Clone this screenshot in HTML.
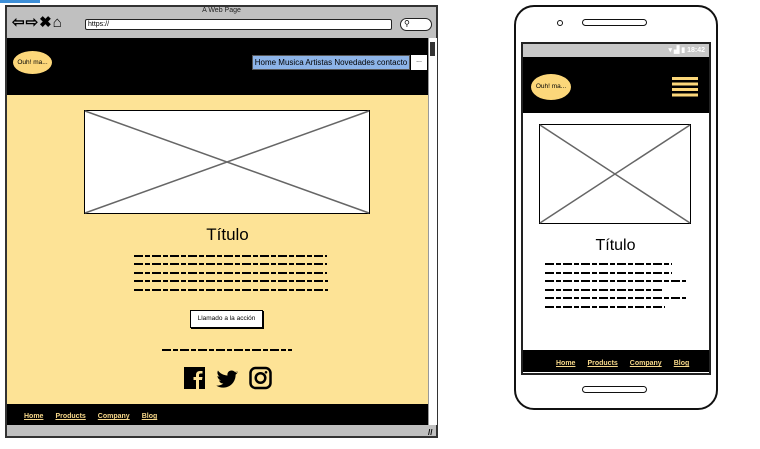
<!DOCTYPE html>
<html><head><meta charset="utf-8"><style>
*{margin:0;padding:0;box-sizing:border-box}
body{width:760px;height:449px;background:#fff;position:relative;overflow:hidden;font-family:"Liberation Sans",sans-serif}
.a{position:absolute}
.sq{position:absolute;height:2px;background:repeating-linear-gradient(90deg,#000 0 9px,transparent 9px 11px,#000 11px 16px,transparent 16px 18px)}
.fl a{color:#f7d88a;text-decoration:underline;font-size:7px;font-weight:bold;margin-right:12px}
</style></head><body>
<div class="a" style="left:0;top:0;width:40px;height:3px;background:#3d8fd8"></div>
<div class="a" style="left:5px;top:5px;width:433px;height:433px;border:2px solid #333;background:#c0c0c0"></div>
<div class="a" style="left:0;top:7px;width:443px;text-align:center;font-size:7px;color:#222">A Web Page</div>
<div class="a" style="left:12px;top:13px;font-size:15px;font-weight:bold;letter-spacing:1px">⇦⇨✖⌂</div>
<div class="a" style="left:85px;top:19px;width:307px;height:11px;border:1.5px solid #222;border-radius:2px;background:#fff;font-size:7px;padding-left:2px;line-height:9px">https://</div>
<div class="a" style="left:400px;top:18px;width:32px;height:13px;border:1.5px solid #222;border-radius:7px;background:#fff;font-size:8px;padding-left:3px;line-height:10px">⚲</div>
<div class="a" style="left:7px;top:38px;width:421px;height:57px;background:#000"></div>
<div class="a" style="left:13px;top:51px;width:39px;height:23px;border-radius:50%;background:#fcd77a;font-size:6.5px;line-height:23px;text-align:center">Ouh! ma...</div>
<div class="a" style="left:252px;top:55px;width:158px;height:15px;background:#8db4e8;border:1px solid #555;font-size:8px;line-height:13px;text-align:center;white-space:nowrap">Home Musica Artistas Novedades contacto</div>
<div class="a" style="left:411px;top:55px;width:16px;height:15px;background:#fff;font-size:7px;text-align:center;line-height:11px">...</div>
<div class="a" style="left:7px;top:95px;width:421px;height:309px;background:#fde396"></div>
<div class="a" style="left:428px;top:38px;width:9px;height:387px;background:#fff;border-left:1px solid #999"></div>
<div class="a" style="left:430px;top:42px;width:5px;height:14px;background:#333"></div>
<svg class="a" style="left:84px;top:110px" width="287" height="105"><rect x="0.5" y="0.5" width="285" height="103" fill="#fff" stroke="#000"/><path d="M1 1L285 103M285 1L1 103" stroke="#666" stroke-width="1.5"/></svg>
<div class="a" style="left:84px;top:225px;width:287px;text-align:center;font-size:17px">Título</div>
<div class="sq" style="left:134px;top:255px;width:193px"></div>
<div class="sq" style="left:134px;top:263px;width:193px"></div>
<div class="sq" style="left:134px;top:272px;width:193px"></div>
<div class="sq" style="left:134px;top:280px;width:194px"></div>
<div class="sq" style="left:134px;top:289px;width:194px"></div>
<div class="a" style="left:190px;top:310px;width:73px;height:18px;background:#fff;border:1.5px solid #000;box-shadow:1px 1px 0 #000;font-size:6.5px;text-align:center;line-height:15px">Llamado a la acción</div>
<div class="sq" style="left:162px;top:349px;width:130px"></div>
<svg class="a" style="left:183px;top:366px" width="90" height="24"><rect x="1" y="1" width="21" height="22" fill="#000"/><path d="M16 23V14h3l.5-3H16V9c0-1 .5-1.5 1.5-1.5H19.5V5H17c-3 0-4 2-4 4v2h-2.5v3H13v9z" fill="#fde396"/><path d="M55 5c-1 .5-2 .8-3 1-1-1-2-1.5-3.5-1.5-2.8 0-4.5 2.4-4 5-4-.2-7.5-2-9.5-5-1.2 2-.5 4.7 1.5 6-.8 0-1.5-.2-2-.6 0 2.3 1.6 4 3.5 4.5-.7.2-1.4.2-2 0 .5 1.8 2.3 3.2 4.3 3.2-2 1.5-4.5 2.2-7 2 2 1.3 4.3 2 6.8 2 8 0 12.7-6.7 12.5-13 1-.6 1.7-1.4 2.3-2.3-.9.4-1.8.6-2.7.7 1-.6 1.6-1.4 1.8-2z" fill="#000"/><rect x="67.5" y="2" width="20" height="20" rx="5" fill="none" stroke="#000" stroke-width="2.5"/><circle cx="77.5" cy="12" r="4.8" fill="none" stroke="#000" stroke-width="2.5"/><circle cx="83" cy="6.3" r="1.3"/></svg>
<div class="a fl" style="left:7px;top:404px;width:421px;height:21px;background:#000;padding:5px 0 0 17px;line-height:10px"><a>Home</a><a>Products</a><a>Company</a><a>Blog</a></div>
<div class="a" style="left:428px;top:428px;font-size:8px;font-weight:bold">//</div>
<div class="a" style="left:514px;top:5px;width:204px;height:405px;border:2.5px solid #111;border-radius:20px;background:#fff"></div>
<div class="a" style="left:557px;top:20px;width:6px;height:6px;border:1.5px solid #111;border-radius:50%"></div>
<div class="a" style="left:582px;top:19px;width:65px;height:7px;border:1.5px solid #111;border-radius:4px"></div>
<div class="a" style="left:582px;top:386px;width:65px;height:7px;border:1.5px solid #111;border-radius:4px"></div>
<div class="a" style="left:521px;top:42px;width:190px;height:333px;border:2px solid #222;background:#fff"></div>
<div class="a" style="left:523px;top:44px;width:186px;height:13px;background:#c8c8c8;color:#fff;font-size:7px;text-align:right;padding-right:4px;line-height:13px;font-weight:bold">▾ ▟ ▮ 18:42</div>
<div class="a" style="left:523px;top:57px;width:186px;height:56px;background:#000"></div>
<div class="a" style="left:531px;top:74px;width:40px;height:26px;border-radius:50%;background:#fcd77a;font-size:6.5px;line-height:26px;text-align:center">Ouh! ma...</div>
<div class="a" style="left:672px;top:77px;width:26px;height:20px;background:repeating-linear-gradient(#fcd77a 0 3px,#000 3px 5.5px)"></div>
<svg class="a" style="left:539px;top:124px" width="153" height="101"><rect x="0.5" y="0.5" width="151" height="99" fill="#fff" stroke="#000"/><path d="M1 1L151 99M151 1L1 99" stroke="#666" stroke-width="1.5"/></svg>
<div class="a" style="left:539px;top:237px;width:153px;text-align:center;font-size:16px">Título</div>
<div class="sq" style="left:545px;top:263px;width:127px"></div>
<div class="sq" style="left:545px;top:272px;width:127px"></div>
<div class="sq" style="left:545px;top:280px;width:141px"></div>
<div class="sq" style="left:545px;top:289px;width:117px"></div>
<div class="sq" style="left:545px;top:297px;width:141px"></div>
<div class="sq" style="left:545px;top:306px;width:120px"></div>
<div class="a fl" style="left:523px;top:350px;width:186px;height:22px;background:#000;padding:6px 0 0 33px;line-height:10px"><a>Home</a><a>Products</a><a>Company</a><a>Blog</a></div>
</body></html>
